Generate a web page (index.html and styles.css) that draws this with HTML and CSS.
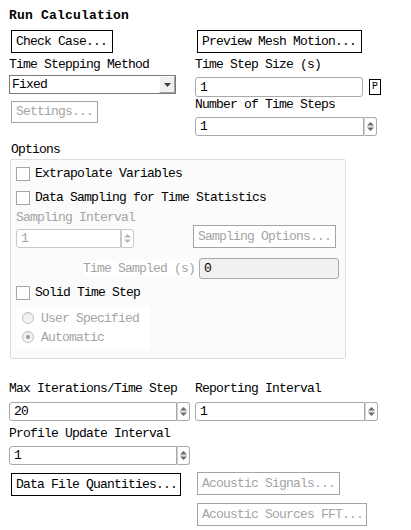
FILE: index.html
```html
<!DOCTYPE html>
<html>
<head>
<meta charset="utf-8">
<link rel="stylesheet" href="styles.css">
</head>
<body>
<div class="page">
  <div class="title">Run Calculation</div>

  <div class="row2 btnrow">
    <div><button class="btn">Check Case...</button></div>
    <div><button class="btn">Preview Mesh Motion...</button></div>
  </div>

  <div class="row2 toprow">
    <div class="col">
      <div class="lbl">Time Stepping Method</div>
      <div class="select">
        <span class="sel-text">Fixed</span>
        <span class="sel-arrow"><svg width="7" height="4" viewBox="0 0 7 4"><path d="M0 0h7L3.5 4z" fill="#404040"/></svg></span>
      </div>
      <button class="btn disabled settings">Settings...</button>
    </div>
    <div class="col">
      <div class="lbl">Time Step Size (s)</div>
      <div class="tsrow">
        <div class="field ts">1</div>
        <span class="pbtn">P</span>
      </div>
      <div class="lbl lbl-ns">Number of Time Steps</div>
      <div class="spin spin-ns">
        <div class="spin-field">1</div>
        <div class="spin-btn"><svg width="7" height="11" viewBox="0 0 7 11"><path d="M3.5 1L7 4.5H0z" fill="#6a6a6a"/><path d="M0 6.5h7L3.5 10z" fill="#6a6a6a"/><path d="M0 5.5h7" stroke="#d8d8d8" stroke-width="1"/></svg></div>
      </div>
    </div>
  </div>

  <div class="lbl opt-lbl">Options</div>
  <div class="panel">
    <div class="cbrow cb1"><span class="cb"></span><span>Extrapolate Variables</span></div>
    <div class="cbrow cb2"><span class="cb"></span><span>Data Sampling for Time Statistics</span></div>
    <div class="samp">
      <div class="samp-left">
        <div class="lbl dis">Sampling Interval</div>
        <div class="spin spin-si dis-spin">
          <div class="spin-field dis">1</div>
          <div class="spin-btn"><svg width="7" height="11" viewBox="0 0 7 11"><path d="M3.5 1L7 4.5H0z" fill="#b4b4b4"/><path d="M0 6.5h7L3.5 10z" fill="#b4b4b4"/></svg></div>
        </div>
      </div>
      <button class="btn disabled sampopt">Sampling Options...</button>
    </div>
    <div class="tsamp">
      <span class="tsamp-lbl dis">Time Sampled (s)</span>
      <div class="field tsamp-field">0</div>
    </div>
    <div class="cbrow cb3"><span class="cb"></span><span>Solid Time Step</span></div>
    <div class="radios">
      <div class="rrow"><span class="radio"></span><span class="dis">User Specified</span></div>
      <div class="rrow"><span class="radio on"></span><span class="dis">Automatic</span></div>
    </div>
  </div>

  <div class="row2 bottom">
    <div class="col">
      <div class="lbl">Max Iterations/Time Step</div>
      <div class="spin spin-b">
        <div class="spin-field">20</div>
        <div class="spin-btn"><svg width="7" height="11" viewBox="0 0 7 11"><path d="M3.5 1L7 4.5H0z" fill="#6a6a6a"/><path d="M0 6.5h7L3.5 10z" fill="#6a6a6a"/><path d="M0 5.5h7" stroke="#d8d8d8" stroke-width="1"/></svg></div>
      </div>
      <div class="lbl lbl-pu">Profile Update Interval</div>
      <div class="spin spin-b">
        <div class="spin-field">1</div>
        <div class="spin-btn"><svg width="7" height="11" viewBox="0 0 7 11"><path d="M3.5 1L7 4.5H0z" fill="#6a6a6a"/><path d="M0 6.5h7L3.5 10z" fill="#6a6a6a"/><path d="M0 5.5h7" stroke="#d8d8d8" stroke-width="1"/></svg></div>
      </div>
      <button class="btn dfq">Data File Quantities...</button>
    </div>
    <div class="col">
      <div class="lbl">Reporting Interval</div>
      <div class="spin spin-b spin-r">
        <div class="spin-field">1</div>
        <div class="spin-btn"><svg width="7" height="11" viewBox="0 0 7 11"><path d="M3.5 1L7 4.5H0z" fill="#6a6a6a"/><path d="M0 6.5h7L3.5 10z" fill="#6a6a6a"/><path d="M0 5.5h7" stroke="#d8d8d8" stroke-width="1"/></svg></div>
      </div>
      <button class="btn disabled acs">Acoustic Signals...</button>
      <button class="btn disabled acf">Acoustic Sources FFT...</button>
    </div>
  </div>
</div>
</body>
</html>
```

FILE: styles.css
```css
* { box-sizing: border-box; }
html, body { margin: 0; padding: 0; background: #ffffff; }
body {
  font-family: "Liberation Mono", "DejaVu Sans Mono", monospace;
  font-size: 13px;
  letter-spacing: -0.8px;
  color: #000;
}
.page { padding: 9px 0 0 9px; width: 411px; }

.title {
  font-weight: bold;
  line-height: 14px;
  height: 14px;
  letter-spacing: 0.2px;
}

.row2 {
  display: grid;
  grid-template-columns: 180px 1fr;
  column-gap: 6px;
}
.col { display: flex; flex-direction: column; align-items: flex-start; }

.btn {
  font: inherit;
  letter-spacing: inherit;
  color: #000;
  background: #fff;
  border: 1px solid #000;
  border-radius: 0;
  height: 23px;
  padding: 0 4px;
  margin: 0 0 0 2px;
  line-height: 21px;
  white-space: nowrap;
}
.btn.disabled { color: #a4a4a4; border-color: #a4a4a4; }

.btnrow { margin-top: 7px; }
.btnrow .btn { padding: 0 5px 0 4px; }

.lbl { line-height: 15px; height: 15px; white-space: nowrap; }
.dis { color: #a4a4a4; }

.toprow { margin-top: 4px; }

.select {
  margin-top: 3px;
  width: 167px;
  height: 19px;
  border: 1px solid #7a7a7a;
  display: flex;
  align-items: center;
  justify-content: space-between;
  padding-left: 2px;
  background: #fff;
}
.sel-text { line-height: 17px; }
.sel-arrow {
  width: 16px;
  height: 17px;
  display: flex;
  align-items: center;
  justify-content: center;
  background: #f0f0f0;
  border-left: 1px solid #fff;
  border-top: 1px solid #fff;
  border-right: 1px solid #a0a0a0;
  border-bottom: 1px solid #a0a0a0;
}
.settings { margin-top: 7px; height: 22px; line-height: 20px; width: 87px; text-align: left; }

.field {
  border: 1px solid #a9a9a9;
  border-radius: 3px;
  background: #fff;
  padding-left: 4px;
  display: flex;
  align-items: center;
}
.tsrow { display: flex; align-items: center; margin-top: 5px; }
.ts { width: 168px; height: 20px; }
.pbtn {
  margin-left: 6px;
  width: 12px;
  height: 16px;
  border: 1px solid #000;
  font-size: 10px;
  letter-spacing: 0;
  line-height: 14px;
  text-align: center;
}
.lbl-ns { margin-top: 0; }

.spin { display: flex; margin-top: 5px; height: 19px; }
.spin-field {
  flex: 1;
  border: 1px solid #a9a9a9;
  border-radius: 3px 0 0 3px;
  background: #fff;
  padding-left: 4px;
  display: flex;
  align-items: center;
}
.spin-btn {
  width: 13px;
  border: 1px solid #a9a9a9;
  border-left: 1px solid #d0d0d0;
  border-radius: 0 3px 3px 0;
  background: #fff;
  display: flex;
  align-items: center;
  justify-content: center;
}
.spin-ns { width: 182px; height: 19px; }

.opt-lbl { margin-top: 6px; margin-left: 2px; }
.panel {
  margin-top: 2px;
  margin-left: 1px;
  width: 336px;
  height: 200px;
  border: 1px solid #dedede;
  border-radius: 2px;
  background: #fbfbfb;
  padding: 7px 0 0 5px;
  display: flex;
  flex-direction: column;
  align-items: flex-start;
}
.cbrow { display: flex; align-items: center; height: 14px; line-height: 14px; }
.cb {
  width: 14px;
  height: 14px;
  border: 1px solid #a6a6a6;
  background: #fff;
  margin-right: 5px;
}
.cb2 { margin-top: 10px; }
.samp {
  margin-top: 5px;
  display: flex;
  align-items: flex-end;
  width: 320px;
  justify-content: space-between;
}
.samp-left { display: flex; flex-direction: column; }
.spin-si { width: 118px; margin-top: 4px; }
.dis-spin .spin-field, .dis-spin .spin-btn { border-color: #c8c8c8; }
.sampopt { margin: 0; height: 23px; width: 143px; text-align: left; }

.tsamp {
  margin-top: 10px;
  display: flex;
  align-items: center;
  padding-left: 67px;
}
.tsamp-lbl { background: #fff; padding: 0 4px 0 0; line-height: 15px; }
.tsamp-field { width: 140px; height: 21px; background: #f1f1f1; border-color: #a9a9a9; }

.cb3 { margin-top: 7px; }
.radios {
  margin-top: 6px;
  width: 134px;
  height: 44px;
  background: #fff;
  padding: 5px 0 0 6px;
}
.rrow { display: flex; align-items: center; height: 14px; margin-bottom: 5px; }
.radio {
  width: 12px;
  height: 12px;
  border-radius: 50%;
  border: 1px solid #bdbdbd;
  background: linear-gradient(#ececec, #f8f8f8);
  margin-right: 7px;
  position: relative;
}
.radio.on::after {
  content: "";
  position: absolute;
  left: 3px;
  top: 3px;
  width: 4px;
  height: 4px;
  border-radius: 50%;
  background: #9a9a9a;
}

.bottom { margin-top: 22px; }
.spin-b { width: 181px; margin-top: 6px; }
.spin-r { width: 183px; }
.lbl-pu { margin-top: 5px; }
.bottom .lbl-pu + .spin-b { margin-top: 5px; }
.dfq { margin-top: 8px; width: 170px; text-align: left; }
.acs { margin-top: 51px; width: 143px; text-align: left; }
.acf { margin-top: 8px; width: 170px; text-align: left; }
```
